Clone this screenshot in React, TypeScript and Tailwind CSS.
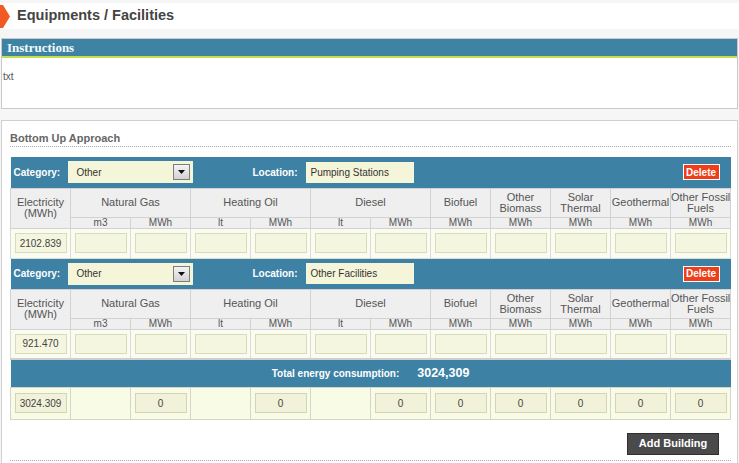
import React from "react";

const font = "font-['Liberation_Sans',Arial,sans-serif]";

const groups = [
  { name: ["Natural Gas"], units: ["m3", "MWh"] },
  { name: ["Heating Oil"], units: ["lt", "MWh"] },
  { name: ["Diesel"], units: ["lt", "MWh"] },
  { name: ["Biofuel"], units: ["MWh"] },
  { name: ["Other", "Biomass"], units: ["MWh"] },
  { name: ["Solar", "Thermal"], units: ["MWh"] },
  { name: ["Geothermal"], units: ["MWh"] },
  { name: ["Other Fossil", "Fuels"], units: ["MWh"] },
];

const units = groups.flatMap((g) => g.units);

const Field = ({ value, total }: { value?: string; total?: boolean }) => (
  <div
    className={`mx-auto flex h-[20px] w-[52px] items-center justify-center border text-[10px] text-[#444] ${
      total ? "border-[#d3d6b4] bg-[#f1f2d9]" : "border-[#d8dcb8] bg-[#f4f6df]"
    }`}
  >
    {value}
  </div>
);

const Block = ({ location, electricity }: { location: string; electricity: string }) => (
  <>
    <tr className="h-[31px] bg-[#3d81a4]">
      <td colSpan={12} className="p-0">
        <div className="flex items-center pl-[3px] pr-[11px]">
          <span className="w-[54px] text-[10px] font-bold text-white">Category:</span>
          <div className="flex h-[22px] w-[125px] items-center justify-between bg-[#f5f6d9] pl-[9px] pr-[3px] text-[10px] text-[#333]">
            Other
            <span className="flex h-[16px] w-[17px] items-center justify-center border border-[#7d7d7d] bg-gradient-to-b from-[#f4f4f4] to-[#d2d2d2]">
              <svg width="7" height="4" viewBox="0 0 7 4">
                <polygon points="0,0 7,0 3.5,4" fill="#111" />
              </svg>
            </span>
          </div>
          <span className="ml-[60px] mr-[8px] text-[10px] font-bold text-white">Location:</span>
          <div className="flex h-[21px] w-[108px] items-center bg-[#f5f6d9] pl-[5px] text-[10px] text-[#333]">
            {location}
          </div>
          <div className="ml-auto flex h-[16px] w-[37px] items-center justify-center border border-white bg-[#ee3e1a] text-[10px] font-bold text-white">
            Delete
          </div>
        </div>
      </td>
    </tr>
    <tr className="h-[29px] bg-[#efefef] text-[11px] leading-[11px] text-[#555]">
      <td rowSpan={2} className="border border-[#d2d2d2] p-0 text-center">
        Electricity
        <br />
        (MWh)
      </td>
      {groups.map((g) => (
        <td
          key={g.name.join(" ")}
          colSpan={g.units.length}
          className="whitespace-nowrap border border-[#d2d2d2] p-0 text-center"
        >
          {g.name.map((line, i) => (
            <div key={i}>{line}</div>
          ))}
        </td>
      ))}
    </tr>
    <tr className="h-[11px] bg-[#efefef] text-[10px] leading-[9px] text-[#555]">
      {units.map((u, i) => (
        <td key={i} className="border border-[#d2d2d2] p-0 text-center">
          {u}
        </td>
      ))}
    </tr>
    <tr className="h-[30px] bg-[#fbfcf1]">
      <td className="border border-[#dcdcd0] p-0">
        <Field value={electricity} />
      </td>
      {units.map((_, i) => (
        <td key={i} className="border border-[#dcdcd0] p-0">
          <Field />
        </td>
      ))}
    </tr>
  </>
);

export default function App() {
  return (
    <div className={`min-h-[463px] bg-[#f6f6f6] pt-[3px] ${font}`}>
      <div className="flex h-[26px] items-center bg-white">
        <svg width="10" height="23" viewBox="0 0 10 23" className="shrink-0">
          <polygon points="0,0 3,0 10,11.5 3,23 0,23" fill="#f15a22" />
        </svg>
        <h1 className="ml-[7px] text-[14.5px] font-bold text-[#444]">Equipments / Facilities</h1>
      </div>

      <div className="mx-[1px] mt-[9px] h-[71px] border border-[#c9c9c9] bg-white">
        <div className="flex h-[17px] items-center bg-[#3e83a3] pl-[5px] font-['Liberation_Serif',serif] text-[13px] font-bold text-[#f2fbff]">
          Instructions
        </div>
        <div className="h-[2px] bg-[#c6dd4e]" />
        <div className="pl-[1px] pt-[11px] text-[10px] text-[#555]">txt</div>
      </div>

      <div className="mx-[1px] mt-[11px] border border-[#d0d0d0] bg-white pb-[6px] pl-[8px] pr-[6px] pt-[11px]">
        <div className="border-b border-dotted border-[#aaa] pb-[2px] text-[11px] font-bold leading-[12px] text-[#666]">
          Bottom Up Approach
        </div>
        <table className="mt-[10px] w-[720px] table-fixed border-collapse">
          <colgroup>
            {Array.from({ length: 12 }).map((_, i) => (
              <col key={i} className="w-[60px]" />
            ))}
          </colgroup>
          <tbody>
            <Block location="Pumping Stations" electricity="2102.839" />
            <Block location="Other Facilities" electricity="921.470" />
            <tr className="h-[28px] border-t-2 border-[#cfcfcf] bg-[#3d81a4]">
              <td colSpan={12} className="p-0">
                <div className="flex items-center justify-center gap-[18px] font-bold text-white">
                  <span className="text-[10px]">Total energy consumption:</span>
                  <span className="text-[12.5px]">3024,309</span>
                </div>
              </td>
            </tr>
            <tr className="h-[32px] bg-[#f8fce6]">
              <td className="border border-[#d6d6c8] p-0">
                <Field value="3024.309" total />
              </td>
              {units.map((u, i) => (
                <td key={i} className="border border-[#d6d6c8] p-0">
                  {u === "MWh" ? <Field value="0" total /> : null}
                </td>
              ))}
            </tr>
          </tbody>
        </table>
        <div className="flex justify-end border-b border-dotted border-[#aaa] pb-[5px] pr-[12px] pt-[13px]">
          <button className="h-[22px] w-[92px] border border-[#2e2e2e] bg-[#4a4a4a] text-[11px] font-bold text-white">
            Add Building
          </button>
        </div>
      </div>
    </div>
  );
}
